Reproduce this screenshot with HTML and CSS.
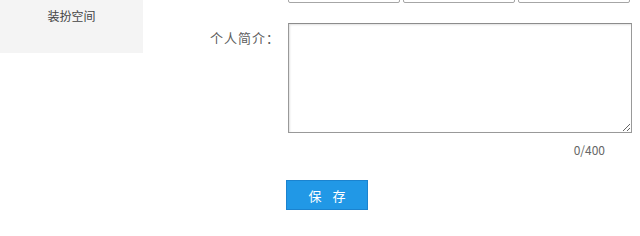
FILE: index.html
```html
<!DOCTYPE html>
<html lang="zh-CN">
<head>
    <meta charset="UTF-8">
    <title>个人资料</title>
    <link rel="stylesheet" href="styles.css">
</head>
<body>
    <div class="layout">
        <div class="side-menu">
            <div class="menu-item">装扮空间</div>
        </div>

        <div class="main">
            <div class="form-row row-birth">
                <div class="form-label"></div>
                <div class="form-field selects">
                    <div class="fake-select"></div>
                    <div class="fake-select"></div>
                    <div class="fake-select"></div>
                </div>
            </div>

            <div class="form-row">
                <div class="form-label">个人简介：</div>
                <div class="form-field">
                    <textarea class="intro" maxlength="400"></textarea>
                    <div class="counter">0/400</div>
                </div>
            </div>

            <div class="form-row">
                <div class="form-label"></div>
                <div class="form-field">
                    <button class="btn-save">保存</button>
                </div>
            </div>
        </div>
    </div>
</body>
</html>
```

FILE: styles.css
```css
body {
    margin: 0;
    font-family: "Noto Sans CJK SC", "DejaVu Sans", sans-serif;
    font-size: 12px;
    color: #333;
    background: #fff;
    overflow: hidden;
}
.layout {
    display: flex;
    align-items: flex-start;
}
.side-menu {
    width: 143px;
    height: 53px;
    background: #f4f4f4;
}
.menu-item {
    text-align: center;
    line-height: 16px;
    padding-top: 8px;
    color: #444;
}
.main {
    flex: 1;
}
.form-row {
    display: flex;
    align-items: flex-start;
}
.form-label {
    width: 137px;
    text-align: right;
    color: #5c5c5c;
    font-size: 13px;
    letter-spacing: 1px;
    line-height: 16px;
    padding-top: 7px;
    flex-shrink: 0;
}
.form-field {
    margin-left: 8px;
}
.row-birth {
    margin-top: -25px;
    margin-bottom: 20px;
}
.selects {
    display: flex;
    gap: 3px;
}
.fake-select {
    width: 110px;
    height: 26px;
    border: 1px solid #a6a6a6;
    border-radius: 2px;
    background: #fff;
}
.intro {
    display: block;
    box-sizing: border-box;
    width: 344px;
    height: 110px;
    margin: 0;
    border: 1px solid #999;
    border-top-color: #8c8c8c;
    box-shadow: inset 1px 1px 2px rgba(0, 0, 0, 0.12);
    resize: both;
    font-family: inherit;
}
.counter {
    text-align: right;
    color: #666;
    padding-right: 27px;
    margin-top: 9px;
    line-height: 16px;
}
.btn-save {
    margin: 22px 0 0 -2px;
    width: 82px;
    height: 30px;
    padding: 0 0 0 11px;
    border: 1px solid #1b83cf;
    background: #2198e6;
    color: #fff;
    font-family: inherit;
    font-size: 13px;
    letter-spacing: 11px;
    cursor: pointer;
}
```
